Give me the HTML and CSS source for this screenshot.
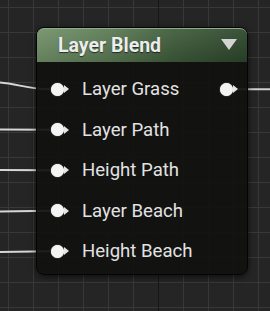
FILE: index.html
```html
<!DOCTYPE html>
<html>
<head>
<meta charset="utf-8">
<link rel="stylesheet" href="styles.css">
</head>
<body>
<div class="canvas">
  <svg class="wires" width="270" height="311" viewBox="0 0 270 311">
    <path d="M0 82.5 C 18 84, 28 89, 50 89.3" />
    <path d="M0 129.5 L 50 129.8" />
    <path d="M0 170 L 50 170.2" />
    <path d="M0 211.5 L 50 210.8" />
    <path d="M0 252 L 50 251.3" />
    <path d="M234 89.3 L 270 89.3" class="out" />
  </svg>
  <div class="node">
    <div class="header">
      <span class="title">Layer Blend</span>
      <span class="caret"></span>
    </div>
    <div class="body">
      <div class="row"><span class="pin"></span><span class="label">Layer Grass</span><span class="pin pin-out"></span></div>
      <div class="row"><span class="pin"></span><span class="label">Layer Path</span></div>
      <div class="row"><span class="pin"></span><span class="label">Height Path</span></div>
      <div class="row"><span class="pin"></span><span class="label">Layer Beach</span></div>
      <div class="row"><span class="pin"></span><span class="label">Height Beach</span></div>
    </div>
  </div>
</div>
</body>
</html>
```
FILE: styles.css
```css
html, body {
  margin: 0;
  padding: 0;
  background: #262626;
}
.canvas {
  position: relative;
  width: 270px;
  height: 311px;
  overflow: hidden;
  background-color: #252525;
  background-image:
    linear-gradient(to right, transparent 158px, #171717 158px, #171717 159px, transparent 159px),
    linear-gradient(to right, #383838 1px, transparent 1px),
    linear-gradient(to bottom, #383838 1px, transparent 1px);
  background-size: 270px 311px, 25px 25px, 25px 25px;
  background-position: 0 0, 8px 7px, 8px 7px;
}
.wires {
  position: absolute;
  left: 0;
  top: 0;
}
.wires path {
  fill: none;
  stroke: #d6d6d6;
  stroke-width: 2;
}
.wires path.out {
  stroke: #cfcfcf;
}
.node {
  position: absolute;
  left: 36px;
  top: 27px;
  width: 212px;
  height: 248px;
  box-sizing: border-box;
  border: 1px solid #050505;
  border-radius: 8px;
  background: rgba(17, 17, 16, 0.93);
  box-shadow: 0 2px 6px rgba(0, 0, 0, 0.6);
  font-family: Roboto, "Liberation Sans", sans-serif;
}
.header {
  height: 34px;
  box-sizing: border-box;
  border-radius: 7px 7px 0 0;
  border-top: 1px solid #8fad86;
  background:
    linear-gradient(to bottom, rgba(255,255,255,0.07), rgba(0,0,0,0.12)),
    linear-gradient(to right, #729169 0%, #5e7d57 30%, #3e5b3a 65%, #2c452b 100%);
  display: flex;
  align-items: center;
  padding-left: 21px;
  padding-right: 10px;
}
.title {
  color: #ececec;
  font-weight: bold;
  font-size: 19.5px;
  text-shadow: 0 1px 1px rgba(0,0,0,0.6);
  flex: 1;
}
.caret {
  width: 0;
  height: 0;
  border-left: 8.5px solid transparent;
  border-right: 8.5px solid transparent;
  border-top: 11px solid #d4d4d4;
  margin-top: -2px;
}
.body {
  padding-top: 7px;
}
.row {
  height: 40.5px;
  display: flex;
  align-items: center;
  padding-left: 14px;
}
.pin {
  position: relative;
  width: 13px;
  height: 13px;
  border-radius: 50%;
  background: #f4f4f4;
  box-shadow: 0 0 1px #fff;
  margin-right: 6px;
  flex: none;
}
.pin::after {
  content: "";
  position: absolute;
  left: 13px;
  top: 2.5px;
  width: 0;
  height: 0;
  border-top: 4px solid transparent;
  border-bottom: 4px solid transparent;
  border-left: 5px solid #e6e6e6;
}
.label {
  margin-left: 12px;
  color: #e2e2e2;
  font-size: 18.6px;
  flex: 1;
  white-space: nowrap;
}
.pin-out {
  margin-right: 14px;
  margin-left: 0;
}
```
